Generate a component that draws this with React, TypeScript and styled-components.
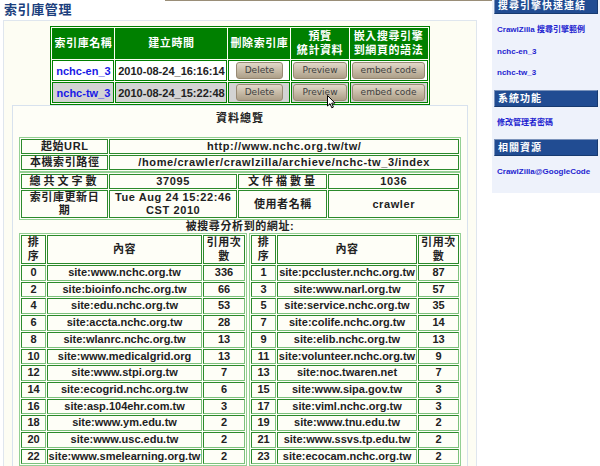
import React from 'react';
import styled, { createGlobalStyle } from 'styled-components';

const GlobalStyle = createGlobalStyle`
  html, body { margin: 0; padding: 0; width: 600px; height: 466px; overflow: hidden; background: #ffffff; }
  body { font-family: "Liberation Sans", "Noto Sans CJK TC", sans-serif; color: #222; }
  * { box-sizing: border-box; }
`;

const Page = styled.div`
  position: relative;
  display: flex;
  align-items: flex-start;
  width: 600px;
  height: 466px;
`;

const Main = styled.div`
  width: 492px;
  display: flex;
  flex-direction: column;
`;

const TopRule = styled.div`
  height: 1px;
  margin-left: 165px;
  background: #9a8e78;
`;

const Title = styled.h1`
  margin: 0 0 2px;
  padding: 1px 0 0 4px;
  font-size: 13px;
  line-height: 16px;
  font-weight: bold;
  letter-spacing: 0.6px;
  color: #1c3f7d;
`;

const OuterBox = styled.div`
  margin-left: 3px;
  width: 474px;
  border: 1px solid #dfe6ee;
  background: #fdfdf3;
  padding: 5px 8px 0;
`;

const IndexTable = styled.table`
  margin: 0 auto;
  border-collapse: separate;
  border-spacing: 1px;
  border: 1px solid #008000;
`;

const HeadCell = styled.th<{ $w: number }>`
  width: ${(p) => p.$w}px;
  background: #008000;
  border: 1px solid #008000;
  color: #ffffff;
  font-size: 11px;
  font-weight: bold;
  letter-spacing: 0.6px;
  line-height: 13.5px;
  padding: 1px 0;
  text-align: center;
  white-space: nowrap;
`;

const IndexCell = styled.td<{ $alt?: boolean }>`
  border: 1px solid #008000;
  background: ${(p) => (p.$alt ? '#d3d3d3' : '#ffffff')};
  font-size: 11px;
  font-weight: bold;
  padding: 1px 1px;
  text-align: center;
  white-space: nowrap;
  color: #222;
`;

const NameLink = styled.a`
  color: #1a1ae6;
  text-decoration: none;
  font-weight: bold;
`;

const Button = styled.button`
  font-family: "DejaVu Sans", sans-serif;
  font-size: 9px;
  color: #404040;
  height: 17px;
  line-height: 15px;
  padding: 0 8px;
  border: 1px solid #988a74;
  border-radius: 3px;
  background: linear-gradient(to bottom, #e2d9ca 0%, #c7bba7 50%, #ad9f88 100%);
  cursor: pointer;
  vertical-align: middle;
`;

const Panel = styled.div`
  border: 1px solid #d8e2ee;
  background: #fefef7;
  padding: 0 6px 30px;
`;

const PanelTitle = styled.div`
  text-align: center;
  font-size: 11px;
  font-weight: bold;
  letter-spacing: 1px;
  line-height: 14px;
  padding: 5px 0 12px;
`;

const InfoTable = styled.table`
  width: 100%;
  table-layout: fixed;
  border-collapse: separate;
  border-spacing: 1px;
  border: 1px solid #93cf93;
`;

const InfoCell = styled.td<{ $w?: string; $wide?: boolean }>`
  ${(p) => (p.$w ? `width: ${p.$w};` : '')}
  border: 1px solid #2b8a2b;
  font-size: 11px;
  font-weight: bold;
  line-height: 13px;
  padding: 0;
  text-align: center;
  white-space: nowrap;
  letter-spacing: ${(p) => (p.$wide ? '3px' : '0.6px')};
`;

const Caption = styled.div`
  text-align: center;
  font-size: 11px;
  font-weight: bold;
  letter-spacing: 0.6px;
  line-height: 13px;
`;

const ListGrid = styled.div`
  display: grid;
  grid-template-columns: 228px 1fr;
  column-gap: 2px;
`;

const ListTable = styled.table`
  width: 100%;
  table-layout: fixed;
  border-collapse: separate;
  border-spacing: 1px;
  border: 1px solid #93cf93;
`;

const ListHead = styled.th<{ $w?: number }>`
  ${(p) => (p.$w ? `width: ${p.$w}px;` : '')}
  border: 1px solid #2b8a2b;
  font-size: 11px;
  font-weight: bold;
  line-height: 13.5px;
  letter-spacing: 0.6px;
  padding: 0;
  text-align: center;
  white-space: nowrap;
`;

const ListCell = styled.td`
  border: 1px solid #2b8a2b;
  border-bottom-color: #7cc17c;
  border-right-color: #7cc17c;
  font-size: 11px;
  font-weight: bold;
  line-height: 13.7px;
  padding: 0;
  text-align: center;
  white-space: nowrap;
  overflow: visible;
`;

const Sidebar = styled.div`
  width: 108px;
  margin-top: -3px;
  background: #eef2fb;
  padding: 0 2px 4px;
`;

const SideHeader = styled.div`
  height: 17px;
  background: #214c92;
  border: 1px solid;
  border-color: #7b93bb #173a70 #173a70 #7b93bb;
  color: #ffffff;
  font-size: 10px;
  font-weight: bold;
  letter-spacing: 1px;
  line-height: 15px;
  padding-left: 3px;
  white-space: nowrap;
  overflow: hidden;
`;

const SideList = styled.div`
  padding: 5px 0 6px;
`;

const SideLink = styled.a`
  display: block;
  font-size: 8px;
  font-weight: bold;
  line-height: 21.5px;
  padding-left: 3px;
  color: #1f1fd0;
  text-decoration: none;
  white-space: nowrap;
`;

const Cursor = styled.svg`
  position: absolute;
  left: 327px;
  top: 95px;
  pointer-events: none;
`;

type Row = [number, string, number];

const leftRows: Row[] = [
  [0, 'site:www.nchc.org.tw', 336],
  [2, 'site:bioinfo.nchc.org.tw', 66],
  [4, 'site:edu.nchc.org.tw', 53],
  [6, 'site:accta.nchc.org.tw', 28],
  [8, 'site:wlanrc.nchc.org.tw', 13],
  [10, 'site:www.medicalgrid.org', 13],
  [12, 'site:www.stpi.org.tw', 7],
  [14, 'site:ecogrid.nchc.org.tw', 6],
  [16, 'site:asp.104ehr.com.tw', 3],
  [18, 'site:www.ym.edu.tw', 2],
  [20, 'site:www.usc.edu.tw', 2],
  [22, 'site:www.smelearning.org.tw', 2],
];

const rightRows: Row[] = [
  [1, 'site:pccluster.nchc.org.tw', 87],
  [3, 'site:www.narl.org.tw', 57],
  [5, 'site:service.nchc.org.tw', 35],
  [7, 'site:colife.nchc.org.tw', 14],
  [9, 'site:elib.nchc.org.tw', 13],
  [11, 'site:volunteer.nchc.org.tw', 9],
  [13, 'site:noc.twaren.net', 7],
  [15, 'site:www.sipa.gov.tw', 3],
  [17, 'site:viml.nchc.org.tw', 3],
  [19, 'site:www.tnu.edu.tw', 2],
  [21, 'site:www.ssvs.tp.edu.tw', 2],
  [23, 'site:ecocam.nchc.org.tw', 2],
];

const indexes = [
  { name: 'nchc-en_3', time: '2010-08-24_16:16:14' },
  { name: 'nchc-tw_3', time: '2010-08-24_15:22:48' },
];

function UrlTable({ rows, contentWidth }: { rows: Row[]; contentWidth: number }) {
  return (
    <ListTable>
      <thead>
        <tr>
          <ListHead $w={25}>排<br />序</ListHead>
          <ListHead $w={contentWidth}>內容</ListHead>
          <ListHead>引用次<br />數</ListHead>
        </tr>
      </thead>
      <tbody>
        {rows.map(([rank, site, count]) => (
          <tr key={rank}>
            <ListCell>{rank}</ListCell>
            <ListCell>{site}</ListCell>
            <ListCell>{count}</ListCell>
          </tr>
        ))}
      </tbody>
    </ListTable>
  );
}

export default function App() {
  return (
    <>
      <GlobalStyle />
      <Page>
        <Main>
          <TopRule />
          <Title>索引庫管理</Title>
          <OuterBox>
            <IndexTable>
              <thead>
                <tr>
                  <HeadCell $w={62}>索引庫名稱</HeadCell>
                  <HeadCell $w={112}>建立時間</HeadCell>
                  <HeadCell $w={62}>刪除索引庫</HeadCell>
                  <HeadCell $w={57}>預覽<br />統計資料</HeadCell>
                  <HeadCell $w={78}>嵌入搜尋引擎<br />到網頁的語法</HeadCell>
                </tr>
              </thead>
              <tbody>
                {indexes.map((ix, i) => (
                  <tr key={ix.name}>
                    <IndexCell $alt={i === 1}><NameLink href="#">{ix.name}</NameLink></IndexCell>
                    <IndexCell $alt={i === 1}>{ix.time}</IndexCell>
                    <IndexCell $alt={i === 1}><Button>Delete</Button></IndexCell>
                    <IndexCell $alt={i === 1}><Button>Preview</Button></IndexCell>
                    <IndexCell $alt={i === 1}><Button>embed code</Button></IndexCell>
                  </tr>
                ))}
              </tbody>
            </IndexTable>
            <Panel>
              <PanelTitle>資料總覽</PanelTitle>
              <InfoTable>
                <tbody>
                  <tr>
                    <InfoCell $w="20%">起始URL</InfoCell>
                    <InfoCell>http://www.nchc.org.tw/tw/</InfoCell>
                  </tr>
                  <tr>
                    <InfoCell>本機索引路徑</InfoCell>
                    <InfoCell>/home/crawler/crawlzilla/archieve/nchc-tw_3/index</InfoCell>
                  </tr>
                </tbody>
              </InfoTable>
              <InfoTable>
                <tbody>
                  <tr>
                    <InfoCell $w="20%" $wide>總共文字數</InfoCell>
                    <InfoCell $w="29.5%">37095</InfoCell>
                    <InfoCell $w="20.5%" $wide>文件檔數量</InfoCell>
                    <InfoCell>1036</InfoCell>
                  </tr>
                  <tr>
                    <InfoCell>索引庫更新日<br />期</InfoCell>
                    <InfoCell>Tue Aug 24 15:22:46<br />CST 2010</InfoCell>
                    <InfoCell>使用者名稱</InfoCell>
                    <InfoCell>crawler</InfoCell>
                  </tr>
                </tbody>
              </InfoTable>
              <Caption>被搜尋分析到的網址:</Caption>
              <ListGrid>
                <UrlTable rows={leftRows} contentWidth={155} />
                <UrlTable rows={rightRows} contentWidth={140} />
              </ListGrid>
            </Panel>
          </OuterBox>
        </Main>
        <Sidebar>
          <SideHeader>搜尋引擎快速連結</SideHeader>
          <SideList>
            <SideLink href="#">CrawlZilla 搜尋引擎範例</SideLink>
            <SideLink href="#">nchc-en_3</SideLink>
            <SideLink href="#">nchc-tw_3</SideLink>
          </SideList>
          <SideHeader>系統功能</SideHeader>
          <SideList>
            <SideLink href="#">修改管理者密碼</SideLink>
          </SideList>
          <SideHeader>相關資源</SideHeader>
          <SideList>
            <SideLink href="#">CrawlZilla@GoogleCode</SideLink>
          </SideList>
        </Sidebar>
        <Cursor width="9" height="14" viewBox="0 0 9 14">
          <path d="M0.5 0.5 L0.5 11 L3 8.6 L4.8 12.8 L6.4 12.1 L4.7 8.1 L8 8.1 Z" fill="#ffffff" stroke="#000000" strokeWidth="1" strokeLinejoin="miter" />
        </Cursor>
      </Page>
    </>
  );
}
